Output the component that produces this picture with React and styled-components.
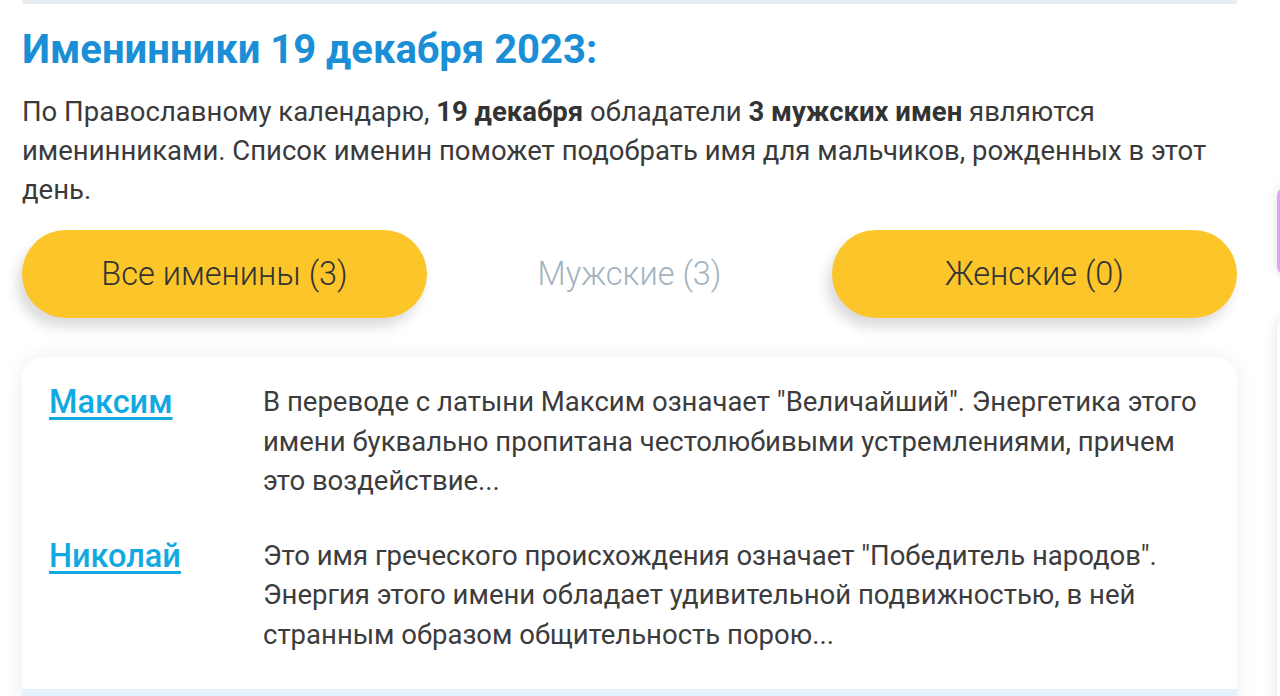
import React from "react";
import styled, { createGlobalStyle } from "styled-components";

const Global = createGlobalStyle`
  html, body { margin: 0; padding: 0; background: #ffffff; }
  body { font-family: Roboto, "Noto Sans", "Liberation Sans", sans-serif; overflow: hidden; }
  * { box-sizing: border-box; }
`;

const Page = styled.div`
  width: 1280px;
  height: 696px;
  overflow: hidden;
  padding: 0 43px 0 22px;
  position: relative;
`;

const TopBar = styled.div`
  height: 4px;
  background: #e8edf1;
  border-radius: 0 0 3px 3px;
`;

const Title = styled.h1`
  margin: 22px 0 0;
  font-size: 40px;
  line-height: 48px;
  font-weight: 700;
  color: #1b8fd6;
`;

const Intro = styled.p`
  margin: 18px 0 0;
  font-size: 27.5px;
  line-height: 39px;
  color: #3a3a3a;
  b { font-weight: 700; color: #333; }
`;

const Tabs = styled.div`
  display: grid;
  grid-template-columns: repeat(3, 1fr);
  margin-top: 21px;
  align-items: center;
`;

const Tab = styled.button`
  height: 88px;
  border: none;
  border-radius: 44px;
  font-family: inherit;
  font-size: 32.5px;
  font-weight: 300;
  cursor: pointer;
  background: ${(p) => (p.$active ? "transparent" : "#fcc52a")};
  color: ${(p) => (p.$active ? "#a3b3c0" : "#333333")};
  box-shadow: ${(p) => (p.$active ? "none" : "-5px 9px 12px rgba(60, 60, 70, 0.18)")};
`;

const Card = styled.div`
  margin-top: 39px;
  background: #fff;
  border-radius: 22px 22px 0 0;
  box-shadow: 0 0 22px rgba(0, 0, 0, 0.07);
  overflow: hidden;
`;

const Row = styled.div`
  display: grid;
  grid-template-columns: 214px 1fr;
  padding: ${(p) => (p.$first ? "25px" : "35px")} 32px 0 27px;
`;

const NameLink = styled.a`
  font-size: 32.5px;
  line-height: 40px;
  font-weight: 500;
  color: #12a9e2;
  text-decoration: underline;
  text-decoration-thickness: 3px;
  text-underline-offset: 4px;
`;

const Desc = styled.div`
  font-size: 27.5px;
  line-height: 39.5px;
  color: #3c3c3c;
`;

const Highlight = styled.div`
  margin-top: 35px;
  height: 60px;
  background: #e3f2fc;
`;

const SideTab = styled.div`
  position: fixed;
  left: 1277px;
  top: 186px;
  width: 30px;
  height: 90px;
  border-radius: 10px 0 0 10px;
  background: #dfa2f6;
  box-shadow: 0 0 12px rgba(0, 0, 0, 0.12);
`;

const SideBox = styled.div`
  position: fixed;
  left: 1277px;
  top: 318px;
  width: 30px;
  height: 400px;
  border-radius: 10px 0 0 0;
  background: #fff;
  box-shadow: 0 0 14px rgba(0, 0, 0, 0.12);
`;

const rows = [
  {
    name: "Максим",
    text: "В переводе с латыни Максим означает \"Величайший\". Энергетика этого имени буквально пропитана честолюбивыми устремлениями, причем это воздействие...",
  },
  {
    name: "Николай",
    text: "Это имя греческого происхождения означает \"Победитель народов\". Энергия этого имени обладает удивительной подвижностью, в ней странным образом общительность порою...",
  },
];

export default function App() {
  return (
    <>
      <Global />
      <Page>
        <TopBar />
        <Title>Именинники 19 декабря 2023:</Title>
        <Intro>
          По Православному календарю, <b>19 декабря</b> обладатели <b>3 мужских имен</b> являются именинниками. Список именин поможет подобрать имя для мальчиков, рожденных в этот день.
        </Intro>
        <Tabs>
          <Tab>Все именины (3)</Tab>
          <Tab $active>Мужские (3)</Tab>
          <Tab>Женские (0)</Tab>
        </Tabs>
        <Card>
          {rows.map((r, i) => (
            <Row key={r.name} $first={i === 0}>
              <div>
                <NameLink href="#">{r.name}</NameLink>
              </div>
              <Desc>{r.text}</Desc>
            </Row>
          ))}
          <Highlight />
        </Card>
      </Page>
      <SideTab />
      <SideBox />
    </>
  );
}
